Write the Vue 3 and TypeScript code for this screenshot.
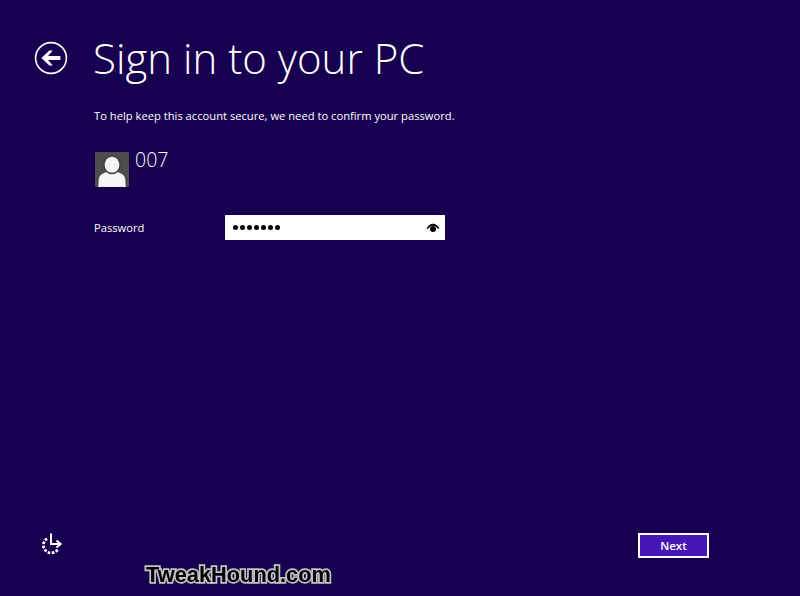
<script setup lang="ts">
const title: string = 'Sign in to your PC'
</script>

<template>
  <div class="screen">
    <header class="head">
      <button class="back" aria-label="Back">
        <svg width="34" height="34" viewBox="0 0 34 34">
          <circle cx="17" cy="17" r="15.4" fill="none" stroke="#fff" stroke-width="1.6" />
          <path d="M7.4 17 15.4 9.4 18.8 9.4 14 15 26.4 15 26.4 19 14 19 18.8 24.6 15.4 24.6Z" fill="#fff" />
        </svg>
      </button>
      <h1>{{ title }}</h1>
    </header>
    <main class="body">
      <p class="intro">To help keep this account secure, we need to confirm your password.</p>
      <div class="user">
        <div class="avatar">
          <svg width="34" height="35" viewBox="0 0 34 35">
            <rect width="34" height="35" fill="#4c4c4c" />
            <path d="M3.2 35 3.8 27C4.2 23.4 7 21.6 11 20.2 14 19.2 20 19.2 23 20.2 27 21.6 29.8 23.4 30.2 27L30.8 35Z" fill="#f6f6f6" />
            <ellipse cx="17" cy="13" rx="8.6" ry="9.3" fill="#3a3a3a" />
            <ellipse cx="17" cy="12.8" rx="7.4" ry="8" fill="#f6f6f6" />
          </svg>
        </div>
        <span class="name">007</span>
      </div>
      <div class="field">
        <label>Password</label>
        <div class="input">
          <span class="dots"><i v-for="n in 7" :key="n"></i></span>
          <svg width="14" height="10" viewBox="0 0 14 10">
            <path d="M0.6 5.4C3 1.6 5 0.8 7 0.8S11 1.6 13.4 5.4L12.2 6C10.2 3.4 8.8 2.7 7 2.7S3.8 3.4 1.8 6Z" fill="#000" />
            <circle cx="7" cy="6" r="3" fill="#000" />
          </svg>
        </div>
      </div>
    </main>
    <footer class="foot">
      <svg class="ease" width="24" height="24" viewBox="0 0 24 24" fill="none" stroke="#fff">
        <path d="M12 1.5V12H20" stroke-width="2" />
        <path d="M17.5 8.4 21.6 12 17.5 15.6" stroke-width="2" />
        <path d="M8 6.6A7.8 7.8 0 1 0 19 17" stroke-width="2.8" stroke-dasharray="2.6 1.5" />
      </svg>
      <button class="next">Next</button>
    </footer>
    <div class="mark">TweakHound.com</div>
  </div>
</template>

<style>
html, body { margin: 0; background: #180050; }
</style>

<style scoped>
.screen {
  position: relative;
  width: 800px;
  height: 596px;
  box-sizing: border-box;
  background: #180050;
  color: #fff;
  font-family: "Open Sans", "Liberation Sans", sans-serif;
  display: flex;
  flex-direction: column;
  overflow: hidden;
}
.head {
  display: flex;
  align-items: center;
  height: 60px;
  padding: 28px 0 0 34px;
}
.back {
  width: 34px;
  height: 34px;
  padding: 0;
  border: 0;
  background: none;
  display: block;
}
.back svg { display: block; }
h1 {
  margin: 0 0 0 25px;
  font-size: 42px;
  font-weight: 300;
  line-height: 60px;
  white-space: nowrap;
}
.body { padding: 20px 0 0 94px; flex: 1; }
.intro { margin: 0; font-size: 11.2px; line-height: 16px; }
.user { display: flex; margin-top: 28px; height: 35px; padding-left: 1px; }
.avatar { width: 34px; height: 35px; }
.avatar svg { display: block; }
.name { margin-left: 6px; font-size: 19.5px; font-weight: 300; line-height: 16px; }
.field { display: flex; align-items: center; margin-top: 28px; }
label { width: 131px; font-size: 11.2px; }
.input {
  width: 220px;
  height: 25px;
  background: #fff;
  display: flex;
  align-items: center;
  justify-content: space-between;
  padding: 0 5px 0 8px;
  box-sizing: border-box;
}
.dots { display: flex; gap: 2px; }
.dots i { width: 5px; height: 5px; border-radius: 50%; background: #000; display: block; }
.foot {
  display: flex;
  align-items: flex-end;
  justify-content: space-between;
  padding: 0 91px 38px 39px;
}
.ease { margin-bottom: 2px; }
.next {
  width: 71px;
  height: 25px;
  box-sizing: border-box;
  border: 2px solid #fff;
  background: #4617b4;
  color: #fff;
  font: 600 11.5px "Open Sans", sans-serif;
  padding: 0;
}
.mark {
  position: absolute;
  left: 146px;
  top: 562px;
  font: 700 21.8px "Liberation Sans", sans-serif;
  color: #000;
  -webkit-text-stroke: 3.4px #c4c4c4;
  paint-order: stroke fill;
  line-height: 26px;
  white-space: nowrap;
  will-change: transform;
}
</style>
